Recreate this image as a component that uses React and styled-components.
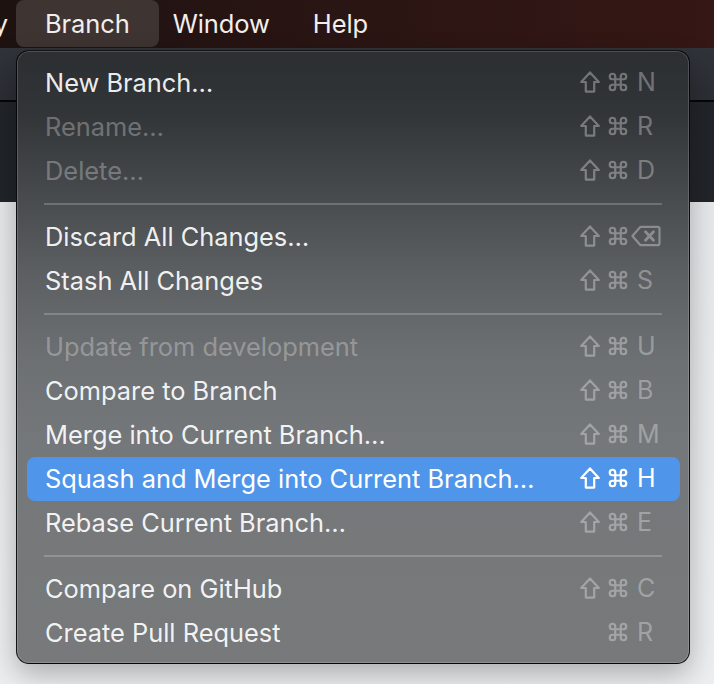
import React from "react";
import styled, { createGlobalStyle } from "styled-components";

const GlobalStyle = createGlobalStyle`
  html, body { margin: 0; padding: 0; }
  body {
    width: 714px;
    height: 684px;
    overflow: hidden;
    font-family: Inter, "Noto Sans", "DejaVu Sans", sans-serif;
    -webkit-font-smoothing: antialiased;
  }
`;

const Screen = styled.div`
  position: relative;
  width: 714px;
  height: 684px;
  display: flex;
  flex-direction: column;
  overflow: hidden;
  background: #e9ebed;
`;

const MenuBar = styled.div`
  height: 48px;
  flex-shrink: 0;
  display: flex;
  align-items: center;
  background: linear-gradient(90deg, #1e1211 0%, #291513 45%, #351715 100%);
  color: #f2eeec;
  font-size: 25.5px;
  letter-spacing: -0.1px;
`;

const PartialTitle = styled.div`
  width: 8px;
  height: 48px;
  overflow: hidden;
  display: flex;
  align-items: center;
  justify-content: flex-end;
  margin-right: 8px;
  padding-bottom: 1px;
  box-sizing: border-box;
  span { flex-shrink: 0; white-space: nowrap; }
`;

const MenuTitle = styled.div`
  height: 47px;
  box-sizing: border-box;
  align-self: flex-start;
  display: flex;
  align-items: center;
  padding: 0 29px 1px;
  margin-right: -15px;
  border-radius: 8px;
  background: ${(p) => (p.$active ? "#3e3432" : "transparent")};
`;

const Toolbar = styled.div`
  height: 52px;
  flex-shrink: 0;
  background: linear-gradient(180deg, #30333a 0%, #2b2e34 100%);
  border-bottom: 2px solid #050607;
`;

const DarkPane = styled.div`
  height: 100px;
  flex-shrink: 0;
  background: #212429;
`;

const LightPane = styled.div`
  flex: 1;
  background: linear-gradient(180deg, #e6e8ea 0%, #eceef0 100%);
`;

const Menu = styled.div`
  position: absolute;
  left: 16px;
  top: 50px;
  width: 674px;
  box-sizing: border-box;
  padding: 10px 9px 8px 10px;
  border: 1px solid rgba(0, 0, 0, 0.85);
  border-radius: 13px;
  background: linear-gradient(
    180deg,
    #2c2f32 0%,
    #323538 10%,
    #45484b 22%,
    #5c5f62 36%,
    #6d7072 50%,
    #75787a 64%,
    #77797a 100%
  );
  box-shadow: inset 0 0 0 1px rgba(255, 255, 255, 0.16),
    0 10px 28px rgba(0, 0, 0, 0.28);
  display: flex;
  flex-direction: column;
`;

const Row = styled.div`
  height: 44px;
  box-sizing: border-box;
  display: flex;
  align-items: center;
  justify-content: space-between;
  padding: 0 19px 2px 18px;
  border-radius: 8px;
  font-size: 25.4px;
  background: ${(p) => (p.$active ? "#4f96ea" : "transparent")};
  color: ${(p) =>
    p.$active
      ? "#ffffff"
      : p.$disabled
      ? "rgba(255,255,255,0.3)"
      : "rgba(255,255,255,0.93)"};
`;

const Label = styled.span`
  white-space: nowrap;
`;

const Shortcut = styled.span`
  display: flex;
  align-items: center;
  gap: 7px;
  color: ${(p) => (p.$active ? "#ffffff" : "rgba(255,255,255,0.33)")};
  svg { flex-shrink: 0; }
`;

const Key = styled.span`
  width: 24px;
  margin-left: 1px;
  display: flex;
  align-items: center;
  font-size: 25px;
`;

const DeleteKey = styled.span`
  display: flex;
  margin-left: -6px;
`;

const Separator = styled.div`
  height: 22px;
  display: flex;
  align-items: center;
  padding: 0 18px 0 17px;
  &::after {
    content: "";
    flex: 1;
    height: 2px;
    background: rgba(255, 255, 255, 0.2);
  }
`;

const ShiftIcon = () => (
  <svg width="20" height="22" viewBox="0 0 20 22" fill="none">
    <path
      d="M10 1.4 L18.8 11 H14.2 V20.6 H5.8 V11 H1.2 Z"
      stroke="currentColor"
      strokeWidth="2.2"
      strokeLinejoin="round"
    />
  </svg>
);

const CmdIcon = () => (
  <svg width="22" height="22" viewBox="0 0 24 24" fill="none">
    <path
      d="M15 6v12a3 3 0 1 0 3-3H6a3 3 0 1 0 3 3V6a3 3 0 1 0-3 3h12a3 3 0 1 0-3-3"
      stroke="currentColor"
      strokeWidth="2.4"
      strokeLinecap="round"
      strokeLinejoin="round"
    />
  </svg>
);

const DeleteIcon = () => (
  <svg width="30" height="22" viewBox="0 0 30 22" fill="none">
    <path
      d="M9.5 1.8 H26.5 a2 2 0 0 1 2 2 V18.2 a2 2 0 0 1 -2 2 H9.5 L1.4 11 Z"
      stroke="currentColor"
      strokeWidth="2.2"
      strokeLinejoin="round"
    />
    <path
      d="M14.5 6.8 L22.5 15.2 M22.5 6.8 L14.5 15.2"
      stroke="currentColor"
      strokeWidth="2.8"
      strokeLinecap="round"
    />
  </svg>
);

const sections = [
  [
    { label: "New Branch…", shift: true, key: "N" },
    { label: "Rename…", shift: true, key: "R", disabled: true },
    { label: "Delete…", shift: true, key: "D", disabled: true },
  ],
  [
    { label: "Discard All Changes…", shift: true, key: "⌫" },
    { label: "Stash All Changes", shift: true, key: "S" },
  ],
  [
    { label: "Update from development", shift: true, key: "U", disabled: true },
    { label: "Compare to Branch", shift: true, key: "B" },
    { label: "Merge into Current Branch…", shift: true, key: "M" },
    {
      label: "Squash and Merge into Current Branch…",
      shift: true,
      key: "H",
      active: true,
    },
    { label: "Rebase Current Branch…", shift: true, key: "E" },
  ],
  [
    { label: "Compare on GitHub", shift: true, key: "C" },
    { label: "Create Pull Request", shift: false, key: "R" },
  ],
];

const MenuItem = ({ item }) => (
  <Row $active={item.active} $disabled={item.disabled}>
    <Label>{item.label}</Label>
    <Shortcut $active={item.active}>
      {item.shift && <ShiftIcon />}
      <CmdIcon />
      <Key>
        {item.key === "⌫" ? (
          <DeleteKey>
            <DeleteIcon />
          </DeleteKey>
        ) : (
          item.key
        )}
      </Key>
    </Shortcut>
  </Row>
);

export default function App() {
  return (
    <>
      <GlobalStyle />
      <Screen>
        <MenuBar>
          <PartialTitle>
            <span>Repository</span>
          </PartialTitle>
          <MenuTitle $active>Branch</MenuTitle>
          <MenuTitle>Window</MenuTitle>
          <MenuTitle>Help</MenuTitle>
        </MenuBar>
        <Toolbar />
        <DarkPane />
        <LightPane />
        <Menu>
          {sections.map((section, i) => (
            <React.Fragment key={i}>
              {i > 0 && <Separator />}
              {section.map((item) => (
                <MenuItem key={item.label} item={item} />
              ))}
            </React.Fragment>
          ))}
        </Menu>
      </Screen>
    </>
  );
}
